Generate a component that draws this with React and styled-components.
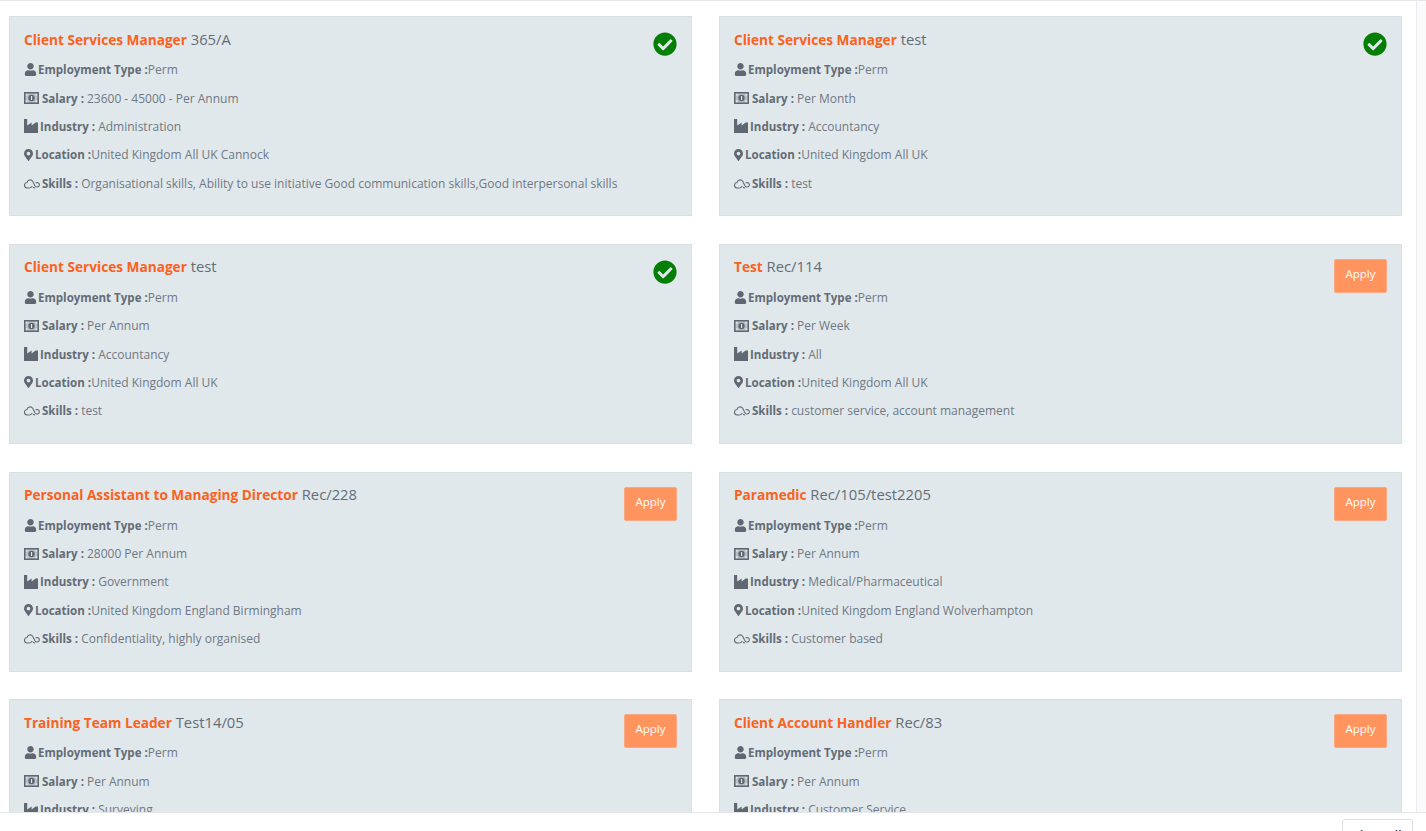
import React from 'react'
import styled, { createGlobalStyle } from 'styled-components'
import { FaUser, FaMapMarkerAlt, FaCheckCircle } from 'react-icons/fa'

const GlobalStyle = createGlobalStyle`
  html, body {
    margin: 0;
    padding: 0;
    height: 100%;
    overflow: hidden;
    background: #fff;
    font-family: "Open Sans", "Liberation Sans", sans-serif;
  }
`

// the last row only shows its first three lines above the bottom bar
const jobs = [
  { title: 'Client Services Manager', ref: '365/A', salary: '23600 - 45000 - Per Annum', industry: 'Administration', location: 'United Kingdom All UK Cannock', skills: 'Organisational skills, Ability to use initiative Good communication skills,Good interpersonal skills', applied: true },
  { title: 'Client Services Manager', ref: 'test', salary: 'Per Month', industry: 'Accountancy', location: 'United Kingdom All UK', skills: 'test', applied: true },
  { title: 'Client Services Manager', ref: 'test', salary: 'Per Annum', industry: 'Accountancy', location: 'United Kingdom All UK', skills: 'test', applied: true },
  { title: 'Test', ref: 'Rec/114', salary: 'Per Week', industry: 'All', location: 'United Kingdom All UK', skills: 'customer service, account management' },
  { title: 'Personal Assistant to Managing Director', ref: 'Rec/228', salary: '28000 Per Annum', industry: 'Government', location: 'United Kingdom England Birmingham', skills: 'Confidentiality, highly organised' },
  { title: 'Paramedic', ref: 'Rec/105/test2205', salary: 'Per Annum', industry: 'Medical/Pharmaceutical', location: 'United Kingdom England Wolverhampton', skills: 'Customer based' },
  { title: 'Training Team Leader', ref: 'Test14/05', salary: 'Per Annum', industry: 'Surveying' },
  { title: 'Client Account Handler', ref: 'Rec/83', salary: 'Per Annum', industry: 'Customer Service' },
]

const Page = styled.div`
  height: 831px;
  overflow: hidden;
  box-sizing: border-box;
  border-top: 1px solid #e4e6ea;
`
const Grid = styled.div`
  display: grid;
  grid-template-columns: 683px 683px;
  column-gap: 27px;
  row-gap: 27.75px;
  padding: 15px 0 0 9px;
`
const Card = styled.div`
  position: relative;
  box-sizing: border-box;
  height: 200px;
  padding: 11.5px 14px 0 14px;
  background: #e1e8eb;
  border: 1px solid #d9dfe4;
`
const Title = styled.div`
  font-size: 14.8px;
  line-height: 20px;
  margin-bottom: 6px;
  color: #646d77;
`
const TitleName = styled.span`
  font-size: 13.65px;
  font-weight: 700;
  color: #fb6120;
`
const Field = styled.div`
  display: flex;
  align-items: center;
  height: 28.35px;
  font-size: 12px;
  color: #6f7883;
  white-space: pre;
`
const FieldIcon = styled.span`
  display: inline-flex;
  align-items: center;
  flex: none;
  width: ${p => p.$width}px;
  margin-right: ${p => p.$gap}px;
  color: #5f6872;
  font-size: ${p => p.$size || 13}px;
`
const Label = styled.b`
  font-size: 11.55px;
  font-weight: 700;
  color: #636c76;
`
const Applied = styled.span`
  position: absolute;
  top: 15px;
  right: 14px;
  display: flex;
  font-size: 24px;
  color: #047e04;
`
const ApplyButton = styled.button`
  position: absolute;
  top: 14px;
  right: 14px;
  width: 53px;
  height: 34px;
  padding: 0 0 5px;
  border: 1px solid #f9a881;
  border-radius: 2px;
  background: #ff945f;
  color: #fff;
  font-family: inherit;
  font-size: 11.5px;
  font-weight: 500;
`
const SideStrip = styled.div`
  position: fixed;
  top: 1px;
  right: 0;
  bottom: 18px;
  width: 9px;
  background: #fafafb;
  border-left: 1px solid #e9ebee;
`
const BottomBar = styled.div`
  position: fixed;
  left: 0;
  right: 0;
  bottom: 0;
  height: 18px;
  background: #fff;
  border-top: 1px solid #e4e6ea;
`
const ShowAll = styled.button`
  position: absolute;
  top: 6px;
  left: 1342px;
  width: 71px;
  height: 30px;
  padding: 3px 0 0;
  border: 1px solid #dcdfe3;
  border-radius: 3px;
  background: #fff;
  color: #333;
  font-family: inherit;
  font-size: 12px;
  font-weight: 600;
`

const MoneyIcon = () => (
  <svg width="15" height="12" viewBox="0 0 15 12">
    <rect x="0.8" y="0.8" width="13.4" height="10.4" fill="none" stroke="currentColor" strokeWidth="1.6" />
    <path d="M1.5 4a2.4 2.4 0 0 0 2.4-2.4h7.2A2.4 2.4 0 0 0 13.5 4v4a2.4 2.4 0 0 0-2.4 2.4H3.9A2.4 2.4 0 0 0 1.5 8z" fill="currentColor" opacity="0.3" />
    <circle cx="7.5" cy="6" r="3.2" fill="currentColor" />
    <rect x="7" y="4" width="1.1" height="4" fill="#e1e8eb" />
  </svg>
)

const IndustryIcon = () => (
  <svg width="14" height="14" viewBox="0 0 14 14">
    <path d="M0 0h3.2v6.6L7.6 3.6v3l4-3h2.4V14H0z" fill="currentColor" />
  </svg>
)

const SkillsIcon = () => (
  <svg width="16" height="11" viewBox="0 0 16 11" fill="none" stroke="currentColor" strokeWidth="1.05">
    <path d="M5.6 9.9H3.4A2.7 2.7 0 0 1 3 4.5 3.2 3.2 0 0 1 8.7 3.2l2.2 4.6c.8 1.4 3 1.6 4 .3 1-1.4.2-3.6-1.7-3.7-.7 0-1.3.2-1.7.6" />
    <path d="M5.6 9.9c1.2 0 2-.7 2.7-1.9M9 9.3c.7.5 1.3.6 2.2.6" />
  </svg>
)

const JobCard = ({ job }) => (
  <Card>
    <Title><TitleName>{job.title}</TitleName> {job.ref}</Title>
    <Field><FieldIcon $width={13} $gap={1}><FaUser /></FieldIcon><Label>Employment Type :</Label>Perm</Field>
    <Field><FieldIcon $width={15} $gap={3}><MoneyIcon /></FieldIcon><Label>Salary : </Label>{job.salary}</Field>
    <Field><FieldIcon $width={14} $gap={2}><IndustryIcon /></FieldIcon><Label>Industry : </Label>{job.industry}</Field>
    {job.location && <Field><FieldIcon $width={9} $gap={2} $size={12}><FaMapMarkerAlt /></FieldIcon><Label>Location :</Label>{job.location}</Field>}
    {job.skills && <Field><FieldIcon $width={16} $gap={2}><SkillsIcon /></FieldIcon><Label>Skills : </Label>{job.skills}</Field>}
    {job.applied
      ? <Applied><FaCheckCircle /></Applied>
      : <ApplyButton>Apply</ApplyButton>}
  </Card>
)

const App = () => (
  <Page>
    <GlobalStyle />
    <Grid>
      {jobs.map((job, i) => <JobCard key={i} job={job} />)}
    </Grid>
    <SideStrip />
    <BottomBar><ShowAll>Show all</ShowAll></BottomBar>
  </Page>
)

export default App
